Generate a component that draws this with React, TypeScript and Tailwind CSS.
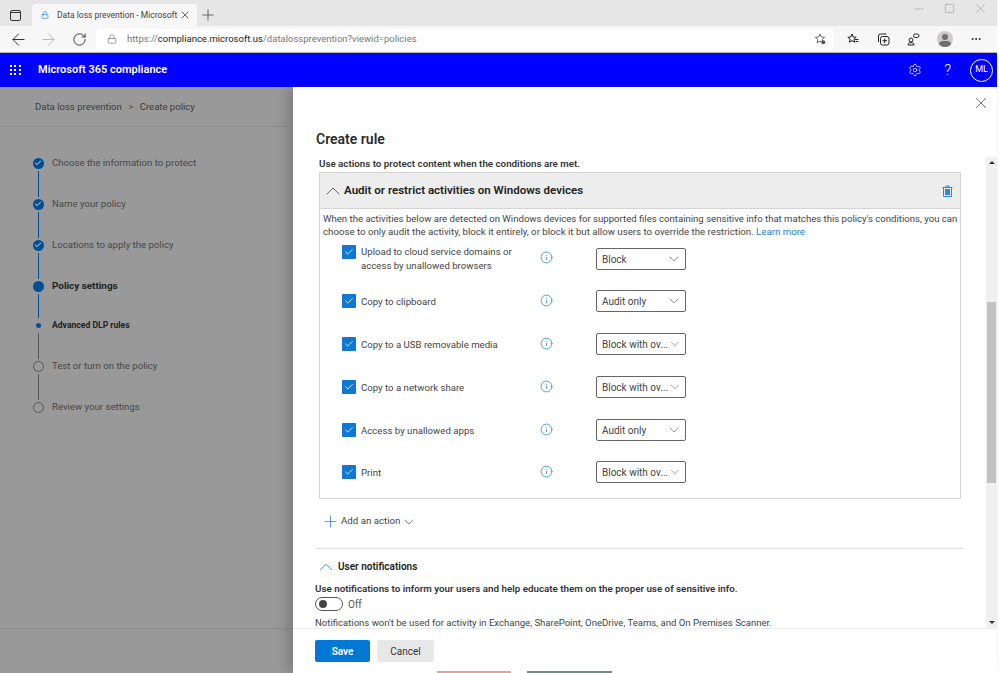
import React from 'react';
import { ArrowLeft, ArrowRight, RotateCw, Lock, Plus, X, Settings, Check, ChevronDown, ChevronUp, Info, Minus, Square, MoreHorizontal } from 'lucide-react';

const font = { fontFamily: 'Roboto, "Open Sans", sans-serif' };

const steps = [
  { label: 'Choose the information to protect', kind: 'done', h: 'h-[41px]' },
  { label: 'Name your policy', kind: 'done', h: 'h-[41px]' },
  { label: 'Locations to apply the policy', kind: 'done', h: 'h-[41px]' },
  { label: 'Policy settings', kind: 'current', h: 'h-[39px]' },
  { label: 'Advanced DLP rules', kind: 'sub', h: 'h-[41px]' },
  { label: 'Test or turn on the policy', kind: 'todo', h: 'h-[41px]' },
  { label: 'Review your settings', kind: 'todo', h: 'h-[20px]' },
];

const actions = [
  { label: ['Upload to cloud service domains or', 'access by unallowed browsers'], value: 'Block', h: 'h-[42px]' },
  { label: ['Copy to clipboard'], value: 'Audit only', h: 'h-[43px]' },
  { label: ['Copy to a USB removable media'], value: 'Block with ov...', h: 'h-[43px]' },
  { label: ['Copy to a network share'], value: 'Block with ov...', h: 'h-[43px]' },
  { label: ['Access by unallowed apps'], value: 'Audit only', h: 'h-[42px]' },
  { label: ['Print'], value: 'Block with ov...', h: 'h-[43px]' },
];

const Step = ({ step, last, blueLine }: { step: (typeof steps)[number]; last: boolean; blueLine: boolean }) => (
  <div className={`flex gap-[8px] ${step.h}`}>
    <div className="flex w-[12px] flex-col items-center">
      <div className="flex h-[12px] w-[12px] items-center justify-center">
        {step.kind === 'done' && (
          <span className="flex h-[11px] w-[11px] items-center justify-center rounded-full bg-[#004f94]">
            <Check className="h-[8px] w-[8px] text-[#d8d8d8]" strokeWidth={3} />
          </span>
        )}
        {step.kind === 'current' && <span className="h-[11px] w-[11px] rounded-full bg-[#004f94]" />}
        {step.kind === 'sub' && <span className="h-[5px] w-[5px] rounded-full bg-[#004f94]" />}
        {step.kind === 'todo' && <span className="h-[11px] w-[11px] rounded-full border border-[#555]" />}
      </div>
      {!last && <div className={`mt-[2px] mb-[1px] w-[1px] flex-1 ${blueLine ? 'bg-[#004f94]' : 'bg-[#555]'}`} />}
    </div>
    <div className={`h-[12px] leading-[12px] whitespace-nowrap ${step.kind === 'current' ? 'text-[9.9px] font-bold text-[#222]' : step.kind === 'sub' ? 'text-[8.6px] font-bold text-[#222]' : 'text-[9.6px] text-[#484848]'}`}>
      {step.label}
    </div>
  </div>
);

const ActionRow = ({ a }: { a: (typeof actions)[number] }) => {
  const two = a.label.length > 1;
  return (
    <div className={`flex items-start pl-[22px] ${a.h}`}>
      <div className="flex w-[198px] gap-[5px]">
        <span className={`flex h-[14px] w-[14px] shrink-0 items-center justify-center rounded-[1px] bg-[#0f78d4] ${two ? '' : 'mt-[7px]'}`}>
          <Check className="h-[10px] w-[10px] text-white" strokeWidth={2} />
        </span>
        <div className={`text-[9.65px] leading-[14px] whitespace-nowrap text-[#444] ${two ? '' : 'mt-[8px]'}`}>
          {a.label.map(l => <div key={l}>{l}</div>)}
        </div>
      </div>
      <Info className={`h-[13px] w-[13px] shrink-0 text-[#2b88d8] ${two ? 'mt-[6px]' : 'mt-[7px]'}`} strokeWidth={1.5} />
      <div className="mt-[3px] ml-[43px] flex h-[22px] w-[90px] items-center justify-between rounded-[2px] border border-[#666] pr-[3px] pl-[5px] text-[10px] whitespace-nowrap text-[#444]">
        <span>{a.value}</span>
        <ChevronDown className="h-[16px] w-[16px] text-[#666]" strokeWidth={1} />
      </div>
    </div>
  );
};

export default function App() {
  return (
    <div className="flex h-[673px] w-[999px] overflow-hidden bg-white text-[#323130]" style={font}>
      <div className="flex h-full w-[997px] flex-col">
        {/* browser tabs */}
        <div className="flex h-[26px] shrink-0 items-end bg-[#e6e6e6] pl-[10px]">
          <div className="mb-[5px] flex h-[11px] w-[11px] flex-col rounded-[2px] border border-[#333]">
            <div className="h-[2px] border-b border-[#333]" />
          </div>
          <div className="ml-[11px] flex h-[22px] w-[165px] items-center rounded-t-[4px] bg-[#f7f7f7] pl-[9px]">
            <Lock className="h-[8px] w-[8px] text-[#2b88d8]" />
            <span className="ml-[8px] w-[122px] text-[8.5px] whitespace-nowrap text-[#444]">Data loss prevention - Microsoft</span>
            <X className="h-[12px] w-[12px] text-[#333]" strokeWidth={1.5} />
          </div>
          <Plus className="mb-[2px] ml-[2px] h-[18px] w-[18px] text-[#444]" strokeWidth={1} />
          <div className="mb-[10px] ml-auto flex items-center gap-[18px] pr-[9px] text-[#999]">
            <Minus className="h-[14px] w-[14px]" strokeWidth={1} />
            <Square className="h-[11px] w-[11px]" strokeWidth={1.25} />
            <X className="h-[15px] w-[15px]" strokeWidth={1} />
          </div>
        </div>
        {/* address bar */}
        <div className="flex h-[27px] shrink-0 items-center border-b border-[#b5b5b5] bg-[#f7f7f7] pl-[9px]">
          <ArrowLeft className="h-[19px] w-[19px] text-[#333]" strokeWidth={1.25} />
          <ArrowRight className="ml-[11px] h-[19px] w-[19px] text-[#bbb]" strokeWidth={1.25} />
          <RotateCw className="ml-[14px] h-[15px] w-[15px] text-[#333]" strokeWidth={1.5} />
          <div className="ml-[9px] flex h-[21px] w-[737px] items-center rounded-[3px] bg-white pl-[11px]">
            <Lock className="h-[10px] w-[10px] text-[#666]" strokeWidth={1.5} />
            <span className="ml-[10px] text-[9.5px] whitespace-nowrap text-[#777]">
              https://<span className="text-[#222]">compliance.microsoft.us</span>/datalossprevention?viewid=policies
            </span>
            <svg className="mr-[7px] ml-auto h-[12px] w-[12px] text-[#444]" viewBox="0 0 12 12" fill="none" stroke="currentColor" strokeWidth="0.8">
              <path d="M6 1l1.400 3 3.200.3-2.400 2.200.7 3.200L6 8.100 3.100 9.700l.7-3.200L1.400 4.300 4.600 4z" />
              <circle cx="9.300" cy="9.300" r="2" fill="#555" stroke="none" />
            </svg>
          </div>
          <svg className="ml-[14px] h-[12px] w-[12px] text-[#222]" viewBox="0 0 12 12" fill="none" stroke="currentColor">
            <path d="M5 1l1.200 3 3 .2-2.300 2 .7 3L5 7.600 2.400 9.200l.7-3-2.300-2 3-.2z" />
            <path d="M8 6.500h3.500M8.500 8.500h3" />
          </svg>
          <svg className="ml-[18px] h-[13px] w-[13px] text-[#222]" viewBox="0 0 13 13" fill="none" stroke="currentColor">
            <rect x="3.500" y="3.500" width="8.500" height="8.500" rx="2" />
            <path d="M1.500 9V3a2 2 0 0 1 2-2h6M7.700 5.500v4.500M5.500 7.700h4.500" />
          </svg>
          <svg className="ml-[17px] h-[13px] w-[13px] text-[#222]" viewBox="0 0 13 13" fill="none" stroke="currentColor">
            <circle cx="4" cy="7" r="2" />
            <path d="M1 12c0-1.500 1.300-2.500 3-2.500s3 1 3 2.500z" />
            <rect x="6.500" y="1" width="5.500" height="3.500" rx="1.700" />
          </svg>
          <div className="relative ml-[17px] h-[16px] w-[16px] overflow-hidden rounded-full bg-[#cdcac8]">
            <span className="absolute top-[3px] left-[5px] h-[6px] w-[6px] rounded-full bg-[#6f6c6a]" />
            <span className="absolute top-[10px] left-[2px] h-[8px] w-[12px] rounded-full bg-[#6f6c6a]" />
          </div>
          <MoreHorizontal className="ml-[17px] h-[12px] w-[12px] text-[#222]" strokeWidth={2} />
        </div>
        {/* suite header */}
        <div className="flex h-[34px] shrink-0 items-center bg-[#0000ff] pl-[10px] text-white">
          <div className="grid h-[11px] w-[11px] grid-cols-3 gap-[2px]">
            {Array.from({ length: 9 }).map((_, i) => <span key={i} className="h-[2px] w-[2px] bg-white" />)}
          </div>
          <span className="ml-[17px] text-[11px] font-semibold whitespace-nowrap">Microsoft 365 compliance</span>
          <Settings className="ml-auto h-[14px] w-[14px]" strokeWidth={1.25} />
          <span className="ml-[22px] text-[15px] font-light">?</span>
          <span className="mr-[4px] ml-[19px] flex h-[23px] w-[23px] items-center justify-center rounded-full border border-white text-[9px]">ML</span>
        </div>
        {/* page body */}
        <div className="flex min-h-0 flex-1">
          <div className="flex w-[293px] shrink-0 flex-col bg-[#999]">
            <div className="flex h-[40px] shrink-0 items-center border-b border-[#8d8d8d] pt-[2px] pl-[35px] text-[9.55px] whitespace-nowrap text-[#3c3c3c]">
              Data loss prevention
              <span className="mx-[6.5px] text-[#555]">&gt;</span>
              Create policy
            </div>
            <div className="flex-1 pt-[30px] pl-[32px]">
              {steps.map((s, i) => <Step key={s.label} step={s} last={i === steps.length - 1} blueLine={i < 4} />)}
            </div>
            <div className="h-[45px] shrink-0 border-t border-[#8d8d8d]" />
          </div>
          <div className="z-10 flex min-w-0 flex-1 flex-col bg-white shadow-[-6px_0_12px_rgba(0,0,0,0.18)]">
            <div className="flex h-[70px] shrink-0 flex-col pl-[23px]">
              <div className="flex justify-end pt-[7px] pr-[7px]">
                <X className="h-[18px] w-[18px] text-[#444]" strokeWidth={1} />
              </div>
              <h1 className="mt-[17px] text-[14px] leading-[20px] font-semibold text-[#2b2b2b]">Create rule</h1>
            </div>
            <div className="flex min-h-0 flex-1">
              <div className="min-w-0 flex-1 overflow-hidden pl-[22px]">
                <p className="mb-[2px] pl-[4px] text-[9.78px] leading-[13px] font-semibold text-[#333]">Use actions to protect content when the conditions are met.</p>
                <div className="ml-[4px] w-[642px] border border-[#d4d4d4]">
                  <div className="flex h-[36px] items-center border-b border-[#d4d4d4] bg-[#ededed] pr-[7px] pl-[1px]">
                    <ChevronUp className="h-[24px] w-[24px] text-[#555]" strokeWidth={0.9} />
                    <span className="ml-[-1px] pt-[1px] text-[11.55px] font-semibold text-[#222]">Audit or restrict activities on Windows devices</span>
                    <svg className="ml-auto h-[12px] w-[11px] text-[#2b88d8]" viewBox="0 0 11 12" fill="none" stroke="currentColor">
                      <path d="M1.500 2.500h8V11.500h-8zM.5 2.500h10M4 2.500V1h3v1.500" />
                      <rect x="3" y="4" width="5" height="6" fill="currentColor" stroke="none" />
                    </svg>
                  </div>
                  <div className="h-[289px]">
                    <p className="px-[3px] pt-[3px] text-[9.58px] leading-[13px] whitespace-nowrap text-[#444]">
                      When the activities below are detected on Windows devices for supported files containing sensitive info that matches this policy's conditions, you can<br />
                      <span className="text-[9.68px]">choose to only audit the activity, block it entirely, or block it but allow users to override the restriction. <span className="text-[#1a7fd0]">Learn more</span></span>
                    </p>
                    <div className="pt-[7px]">
                      {actions.map(a => <ActionRow key={a.label[0]} a={a} />)}
                    </div>
                  </div>
                </div>
                <div className="flex h-[49px] items-center pb-[4px] pl-[6px] text-[9.7px] text-[#444]">
                  <Plus className="h-[19px] w-[19px] text-[#2b88d8]" strokeWidth={1} />
                  <span className="ml-[1px]">Add an action</span>
                  <ChevronDown className="ml-[1px] h-[16px] w-[16px] text-[#555]" strokeWidth={1} />
                </div>
                <div className="w-[649px] border-t border-[#e1e1e1]" />
                <div className="flex h-[35px] items-center">
                  <ChevronUp className="h-[22px] w-[22px] text-[#2b88d8]" strokeWidth={1} />
                  <span className="ml-[1px] text-[10px] font-semibold text-[#222]">User notifications</span>
                </div>
                <p className="-mt-[2px] text-[9.8px] leading-[13px] font-semibold whitespace-nowrap text-[#333]">Use notifications to inform your users and help educate them on the proper use of sensitive info.</p>
                <div className="mt-[2px] flex h-[14px] items-center">
                  <span className="flex h-[14px] w-[28px] items-center rounded-full border border-[#555] pl-[3px]">
                    <span className="h-[8px] w-[8px] rounded-full bg-[#444]" />
                  </span>
                  <span className="ml-[5px] text-[10px] text-[#555]">Off</span>
                </div>
                <p className="mt-[5px] text-[9.56px] leading-[13px] whitespace-nowrap text-[#444]">Notifications won't be used for activity in Exchange, SharePoint, OneDrive, Teams, and On Premises Scanner.</p>
              </div>
              {/* scrollbar */}
              <div className="flex w-[11px] shrink-0 flex-col items-center bg-[#f0f0f0]">
                <span className="mt-[4px] h-0 w-0 border-x-[3px] border-b-[3px] border-x-transparent border-b-[#333]" />
                <div className="mt-[138px] h-[181px] w-[9px] bg-[#c2c2c2]" />
                <span className="mt-auto mb-[4px] h-0 w-0 border-x-[3px] border-t-[3px] border-x-transparent border-t-[#333]" />
              </div>
            </div>
            <div className="flex h-[45px] shrink-0 flex-col border-t border-[#ededed]">
              <div className="flex flex-1 items-start gap-[7px] pt-[11px] pl-[22px]">
                <button className="h-[22px] w-[55px] rounded-[2px] bg-[#0078d4] text-[10px] font-semibold text-white">Save</button>
                <button className="h-[22px] w-[57px] rounded-[2px] bg-[#e8e8e8] text-[10px] text-[#333]">Cancel</button>
              </div>
              <div className="flex h-[2px] pl-[144px]">
                <span className="w-[74px] bg-[#e9a08c]" />
                <span className="ml-[16px] w-[85px] bg-[#6f8f84]" />
              </div>
            </div>
          </div>
        </div>
      </div>
    </div>
  );
}
